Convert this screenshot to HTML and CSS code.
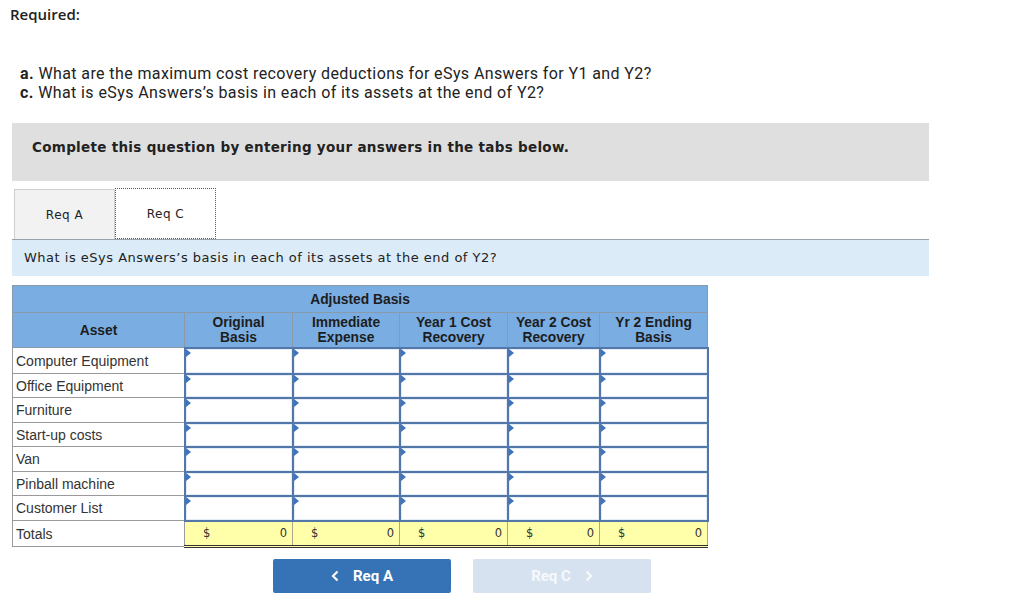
FILE: index.html
```html
<!DOCTYPE html>
<html lang="en">
<head>
<meta charset="UTF-8">
<title>Required</title>
<link rel="stylesheet" href="styles.css">
</head>
<body>

<div class="page">
  <h2 class="required">Required:</h2>

  <div class="questions">
    <p><b>a.</b> What are the maximum cost recovery deductions for eSys Answers for Y1 and Y2?</p>
    <p><b>c.</b> What is eSys Answers’s basis in each of its assets at the end of Y2?</p>
  </div>

  <div class="instructions">Complete this question by entering your answers in the tabs below.</div>

  <!-- tabs -->
  <div class="tabs">
    <div class="tab">Req A</div>
    <div class="tab active">Req C</div>
  </div>

  <div class="prompt">What is eSys Answers’s basis in each of its assets at the end of Y2?</div>

  <table class="grid">
    <colgroup>
      <col class="c-asset">
      <col class="c-orig">
      <col class="c-imm">
      <col class="c-y1">
      <col class="c-y2">
      <col class="c-end">
    </colgroup>
    <thead>
      <tr class="head-top">
        <th colspan="6">Adjusted Basis</th>
      </tr>
      <tr class="head-cols">
        <th>Asset</th>
        <th>Original<br>Basis</th>
        <th>Immediate<br>Expense</th>
        <th>Year 1 Cost<br>Recovery</th>
        <th>Year 2 Cost<br>Recovery</th>
        <th>Yr 2 Ending<br>Basis</th>
      </tr>
    </thead>
    <tbody>
      <tr><td class="label">Computer Equipment</td><td class="in"></td><td class="in"></td><td class="in"></td><td class="in"></td><td class="in"></td></tr>
      <tr><td class="label">Office Equipment</td><td class="in"></td><td class="in"></td><td class="in"></td><td class="in"></td><td class="in"></td></tr>
      <tr><td class="label">Furniture</td><td class="in"></td><td class="in"></td><td class="in"></td><td class="in"></td><td class="in"></td></tr>
      <tr><td class="label">Start-up costs</td><td class="in"></td><td class="in"></td><td class="in"></td><td class="in"></td><td class="in"></td></tr>
      <tr><td class="label">Van</td><td class="in"></td><td class="in"></td><td class="in"></td><td class="in"></td><td class="in"></td></tr>
      <tr><td class="label">Pinball machine</td><td class="in"></td><td class="in"></td><td class="in"></td><td class="in"></td><td class="in"></td></tr>
      <tr><td class="label">Customer List</td><td class="in"></td><td class="in"></td><td class="in"></td><td class="in"></td><td class="in"></td></tr>
      <tr class="totals">
        <td class="label">Totals</td>
        <td class="sum"><span>$</span><span>0</span></td>
        <td class="sum"><span>$</span><span>0</span></td>
        <td class="sum"><span>$</span><span>0</span></td>
        <td class="sum"><span>$</span><span>0</span></td>
        <td class="sum"><span>$</span><span>0</span></td>
      </tr>
    </tbody>
  </table>

  <div class="nav">
    <button class="btn prev">
      <svg class="chev" width="8" height="12" viewBox="0 0 8 12"><path d="M6.5 1.5 L2 6 L6.5 10.5" fill="none" stroke="currentColor" stroke-width="2.2"/></svg>
      Req A
    </button>
    <button class="btn next">
      Req C
      <svg class="chev" width="8" height="12" viewBox="0 0 8 12"><path d="M1.5 1.5 L6 6 L1.5 10.5" fill="none" stroke="currentColor" stroke-width="2.2"/></svg>
    </button>
  </div>
</div>

</body>
</html>
```

FILE: styles.css
```css
* {
  box-sizing: border-box;
}

body {
  margin: 0;
  background: #fff;
  color: #222;
  font-family: "Open Sans", Lato, sans-serif;
}

.page {
  padding: 4px 12px 0 12px;
  width: 941px;
}

.required {
  margin: 0 0 0 -2px;
  font-size: 15px;
  font-weight: 600;
  line-height: 20px;
}

.questions {
  margin-top: 40px;
  padding-left: 8px;
  font-family: Roboto, "Open Sans", sans-serif;
  font-size: 16px;
  letter-spacing: 0.4px;
  line-height: 19px;
}

.questions p {
  margin: 0;
}

.questions b {
  font-weight: 700;
}

/* グレーの案内枠 */
.instructions {
  margin-top: 21px;
  height: 58px;
  padding: 16px 20px;
  background: #dfdfdf;
  font-family: "DejaVu Sans", Verdana, sans-serif;
  font-weight: bold;
  font-size: 13.5px;
  letter-spacing: 0.3px;
  color: #222;
}

.tabs {
  display: flex;
  margin-top: 7px;
  padding-left: 2px;
  height: 51px;
  align-items: flex-end;
}

.tab {
  width: 101px;
  height: 50px;
  display: flex;
  align-items: center;
  justify-content: center;
  font-family: "DejaVu Sans", Verdana, sans-serif;
  font-size: 12px;
  letter-spacing: 0.5px;
  color: #222;
  background: #f2f2f2;
  border: 1px solid #cfcfcf;
  border-bottom: none;
}

.tab.active {
  height: 51px;
  background: #fff;
  border: 1px dotted #3d5f8a;
}

.prompt {
  height: 37px;
  padding: 10px 12px 0;
  background: #dbebf8;
  border-top: 1px solid #9aa3ab;
  font-family: "DejaVu Sans", Verdana, sans-serif;
  font-size: 13px;
  letter-spacing: 0.5px;
  color: #222;
}

/* 表 */
.grid {
  margin-top: 9px;
  border-collapse: collapse;
  width: 695px;
  table-layout: fixed;
  font-family: "Liberation Sans", Arial, sans-serif;
  font-size: 13px;
}

.c-asset { width: 172px; }
.c-orig  { width: 108px; }
.c-imm   { width: 107px; }
.c-y1    { width: 108px; }
.c-y2    { width: 92px; }
.c-end   { width: 108px; }

.grid th {
  background: #7aade2;
  border: 1px solid #8b9aab;
  font-weight: bold;
  color: #1d1d1d;
  font-size: 13.8px;
  line-height: 15px;
  text-align: center;
  padding: 0;
}

.head-top th {
  height: 27px;
}

.head-cols th {
  height: 35px;
}

.grid td {
  height: 25px;
  padding: 0;
}

/* 行の高さは25pxと24pxが交互 */
.grid tbody tr:nth-child(even) td {
  height: 24px;
}

.grid tbody tr:first-child td {
  height: 26px;
}

.grid tbody tr.totals td {
  height: 26px;
}

.grid td.label {
  border: 1px solid #9a9a9a;
  padding-left: 3px;
  font-size: 14px;
  color: #333;
}

.grid td.in {
  position: relative;
  background: #fff;
  border: 2px solid #5377a8;
  box-shadow: inset 0 0 0 1px #e3ecf7;
}

/* 入力欄の左上の三角 */
.grid td.in::before {
  content: "";
  position: absolute;
  left: 0;
  top: 0;
  border-top: 4px solid transparent;
  border-bottom: 4px solid transparent;
  border-left: 5px solid #3d74c0;
}

.totals td.sum {
  background: #ffffaa;
  border-top: 2px solid #5377a8;
  border-left: 1px solid #a9a98a;
  border-right: 1px solid #a9a98a;
  border-bottom: 3px double #333;
  font-family: "DejaVu Sans", Verdana, sans-serif;
  font-size: 11.5px;
  color: #333;
  padding: 0 5px 0 18px;
}

.totals td.sum span:last-child {
  float: right;
}

.nav {
  display: flex;
  gap: 22px;
  margin: 11px 0 0 261px;
}

.btn {
  width: 178px;
  height: 34px;
  border: none;
  border-radius: 2px;
  display: flex;
  align-items: center;
  justify-content: center;
  gap: 14px;
  font-family: Roboto, "Open Sans", sans-serif;
  font-weight: bold;
  font-size: 15px;
  color: #fff;
  cursor: pointer;
}

.chev {
  display: block;
}

.prev {
  background: #3673b6;
}

.next {
  background: #d6e2f0;
  color: #f6f9fc;
}
```
